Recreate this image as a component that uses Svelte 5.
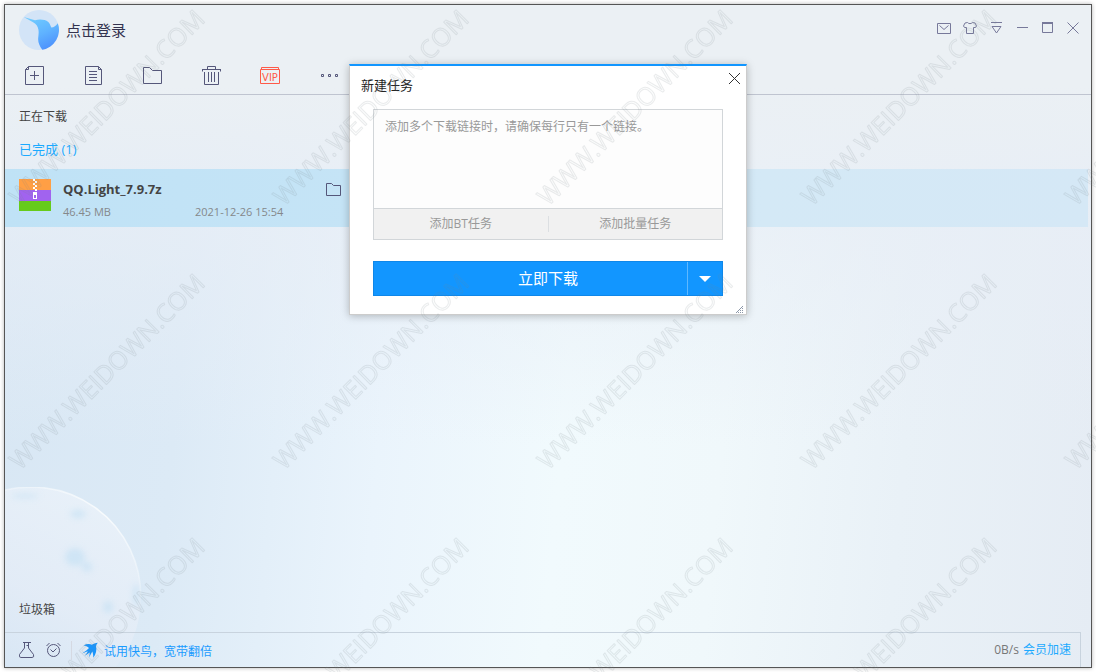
<script>
    let links = $state('')
    let tab = $state('done')

    const file = { name: 'QQ.Light_7.9.7z', size: '46.45 MB', date: '2021-12-26 15:54' }
</script>

<div class="page">
    <div class="window">
        <svg class="planet" viewBox="0 0 142 180" aria-hidden="true">
            <defs>
                <linearGradient id="planet-fill" x1=".8" y1="0" x2=".3" y2="1">
                    <stop offset="0" stop-color="#ecf3fa" stop-opacity=".8" />
                    <stop offset=".5" stop-color="#e6edf7" stop-opacity=".7" />
                    <stop offset="1" stop-color="#cfe2f3" stop-opacity=".7" />
                </linearGradient>
                <linearGradient id="planet-rim" x1="0" y1="0" x2="1" y2="1">
                    <stop offset="0" stop-color="#f6fafd" stop-opacity=".4" />
                    <stop offset=".5" stop-color="#f8fbfd" />
                    <stop offset="1" stop-color="#f6fafd" stop-opacity=".3" />
                </linearGradient>
                <filter id="soft"><feGaussianBlur stdDeviation="3" /></filter>
            </defs>
            <circle cx="26" cy="110" r="110" fill="url(#planet-fill)" />
            <path d="M-10 6A110 110 0 0 1 136 110" fill="none" stroke="url(#planet-rim)" stroke-width="1.5" />
            <g fill="#b9dcf3" filter="url(#soft)" opacity=".5">
                <ellipse cx="73" cy="27" rx="8" ry="4" />
                <ellipse cx="70" cy="70" rx="10" ry="9" />
                <ellipse cx="82" cy="80" rx="5" ry="5" />
                <ellipse cx="131" cy="108" rx="3" ry="12" />
                <ellipse cx="103" cy="120" rx="5" ry="6" />
                <ellipse cx="20" cy="9" rx="14" ry="2" />
            </g>
        </svg>

        <header class="title-bar">
            <button class="login">
                <svg width="40" height="40" viewBox="0 0 40 40" aria-hidden="true">
                    <defs>
                        <linearGradient id="bird" x1=".3" y1="0" x2=".8" y2="1">
                            <stop offset="0" stop-color="#6fcbff" />
                            <stop offset=".5" stop-color="#5fb2ff" />
                            <stop offset="1" stop-color="#4a8cfc" />
                        </linearGradient>
                    </defs>
                    <circle cx="20" cy="20" r="20" fill="#d3e4f7" />
                    <path fill="url(#bird)" d="M4.7 7L16 10.3C20 9 26 9.2 29.3 12C31 13.5 31.5 16 32.3 17.6C35 17.5 37 15.5 38.8 13.2A20 20 0 0 1 23.3 39.7C20.5 36 18.8 32 19.2 28C19.4 25 20 23 19.4 19.5C18.8 16 17 13.8 14.5 12.4Z" />
                </svg>
                <span>点击登录</span>
            </button>
            <div class="window-controls">
                <button aria-label="消息">
                    <svg viewBox="0 0 14 14"><path d="M.5 2.5H13.5V12.5H.5ZM2.5 4.5L7 8.5L11.5 4.5" /></svg>
                </button>
                <button aria-label="皮肤">
                    <svg viewBox="0 0 14 14"><path d="M4.5 1.5C5.5 3 8.5 3 9.5 1.5L12 2L13.5 5L12.5 6.5H10.5V12.5H3.5V6.5H1.5L.5 5L2 2Z" /></svg>
                </button>
                <button aria-label="菜单">
                    <svg viewBox="0 0 14 14"><path d="M2 1.5H13M3 5.5H12L7.5 12Z" /></svg>
                </button>
                <button aria-label="最小化">
                    <svg viewBox="0 0 14 14"><path d="M2 6.5H13" /></svg>
                </button>
                <button aria-label="最大化">
                    <svg viewBox="0 0 14 14"><path d="M1.5 2V11.5H11.5V2" /><path d="M1 2H12" stroke-width="2" /></svg>
                </button>
                <button aria-label="关闭">
                    <svg viewBox="0 0 14 14"><path d="M.5 1.5L11.5 12.5M11.5 1.5L.5 12.5" /></svg>
                </button>
            </div>
        </header>

        <div class="toolbar">
            <button aria-label="新建">
                <svg viewBox="0 0 20 20"><path d="M4.5.5H19.5V18.5H1.5V3.5ZM1.5 3.5H4.5V.5M10.5 5V14M6 9.5H15" /></svg>
            </button>
            <button aria-label="列表">
                <svg viewBox="0 0 20 20"><path d="M2.5.5H15.5L18.5 3.5V18.5H2.5ZM15.5.5V3.5H18.5M6 5.5H14M6 8.5H14M6 11.5H14M6 14.5H14" /></svg>
            </button>
            <button aria-label="打开文件夹">
                <svg viewBox="0 0 20 20"><path d="M1.5 17.5V1.5H7.5L10.5 4.5H19.5V17.5Z" /></svg>
            </button>
            <button aria-label="删除">
                <svg viewBox="0 0 20 20"><path d="M6.5 3V.5H14.5V3M1 3.5H20M1.5 5.5V3.5M19.5 5.5V3.5M3.5 6V18.5H17.5V6M7.5 6V16M10.5 6V16M13.5 6V16" /></svg>
            </button>
            <button class="vip" aria-label="会员">
                <svg viewBox="0 0 20 20">
                    <path d="M1.5 3.5V1.5H18.5V3.5M.5 3.5H19.5V17.5H.5Z" />
                    <text x="10" y="15" text-anchor="middle">VIP</text>
                </svg>
            </button>
            <button aria-label="更多">
                <svg viewBox="0 0 20 20"><path d="M2.5 8.5H4.5V10.5H2.5ZM9.5 8.5H11.5V10.5H9.5ZM16.5 8.5H18.5V10.5H16.5Z" /></svg>
            </button>
        </div>

        <main>
            <nav>
                <button class:active={tab === 'loading'} onclick={() => (tab = 'loading')}>正在下载</button>
                <button class:active={tab === 'done'} onclick={() => (tab = 'done')}>已完成 (1)</button>
            </nav>

            <div class="task">
                <svg width="32" height="32" viewBox="0 0 32 32" shape-rendering="crispEdges" aria-hidden="true">
                    <path fill="#ff9f45" d="M0 0H32V11H0Z" />
                    <path fill="#a163ef" d="M0 11H32V22H0Z" />
                    <path fill="#66cb1b" d="M0 22H32V32H0Z" />
                    <path fill="#fff" d="M14 0H16V2H14ZM16 2H18V4H16ZM14 4H16V6H14ZM16 6H18V8H16ZM14 8H16V10H14ZM16 10H18V12H16Z" />
                    <path fill="#fff" fill-rule="evenodd" d="M14 13H18V20H14ZM15 16V19H17V16Z" />
                </svg>
                <div class="info">
                    <strong>{file.name}</strong>
                    <div class="meta">
                        <span>{file.size}</span>
                        <span>{file.date}</span>
                    </div>
                </div>
                <button class="open" aria-label="打开所在文件夹">
                    <svg width="16" height="14" viewBox="0 0 16 14"><path d="M.5 12.5V.5H5.5L7.5 2.5H14.5V12.5Z" /></svg>
                </button>
            </div>

            <button class="trash">垃圾箱</button>
        </main>

        <footer>
            <button aria-label="实验室">
                <svg width="18" height="16" viewBox="0 0 18 16"><path d="M4 .5H12M5.500 .5V6L.5 12.5Q-.5 15.500 2 15.500H13Q15.500 15.500 14.500 12.500L9.500 6V.5M7.500 3.500H9.500" /></svg>
            </button>
            <button aria-label="定时">
                <svg width="16" height="16" viewBox="0 0 16 16"><circle cx="7.5" cy="8.5" r="6" /><path d="M4.5 7.5L7 10L10.5 6.5M.5 4L3.5 1M11.5 1L14.5 4" /></svg>
            </button>
            <a class="promo" href="#kuainiao">
                <svg width="16" height="16" viewBox="0 0 16 16" aria-hidden="true">
                    <path fill="#1a95fb" d="M1.5 3.5C4.5 1.8 7.5 1.6 10 2.8C11.5 1.6 13.5 1 15.8.7C15 1.6 14.3 2.6 14 4C15 8 14 12 11.3 15.8C11.3 13 11 11 10.3 9.5L7 15.5C7.5 13 7.8 11.5 7.7 10.5L2.5 14C4.5 11.8 5.3 10.5 5.7 9.3L0 11.5C3 9.5 5.5 7.8 7 6C5.5 4.5 3.8 3.7 1.5 3.5Z" />
                </svg>
                <span>试用快鸟，宽带翻倍</span>
            </a>
            <span class="speed">0B/s</span>
            <a href="#vip">会员加速</a>
        </footer>

        <form class="dialog" role="dialog" aria-labelledby="dialog-title" onsubmit={(e) => e.preventDefault()}>
            <div class="dialog-head">
                <h2 id="dialog-title">新建任务</h2>
                <button type="button" aria-label="关闭窗口">
                    <svg width="13" height="13" viewBox="0 0 13 13"><path d="M1 1L12 12M12 1L1 12" /></svg>
                </button>
            </div>
            <div class="links">
                <textarea bind:value={links} aria-label="下载链接" placeholder="添加多个下载链接时，请确保每行只有一个链接。"></textarea>
                <div class="sources">
                    <button type="button">添加BT任务</button>
                    <i></i>
                    <button type="button">添加批量任务</button>
                </div>
            </div>
            <div class="download">
                <button class="start" type="submit">立即下载</button>
                <button class="more" type="button" aria-label="更多选项">
                    <svg width="12" height="6" viewBox="0 0 12 6"><path d="M0 0H12L6 6Z" /></svg>
                </button>
            </div>
            <svg class="grip" width="8" height="8" viewBox="0 0 8 8" shape-rendering="crispEdges" aria-hidden="true">
                <path d="M6 0H7V1H6ZM4 2H5V3H4ZM6 2H7V3H6ZM2 4H3V5H2ZM4 4H5V5H4ZM6 4H7V5H6ZM0 6H1V7H0ZM2 6H3V7H2ZM4 6H5V7H4ZM6 6H7V7H6ZM5 1H6V2H5ZM3 3H4V4H3ZM1 5H2V6H1Z" />
            </svg>
        </form>
    </div>

    <svg class="watermark" aria-hidden="true">
        <defs>
            <pattern id="mark" width="264" height="264" patternUnits="userSpaceOnUse">
                <text transform="translate(20 207) rotate(-45)">WWW.WEIDOWN.COM</text>
            </pattern>
        </defs>
        <rect width="100%" height="100%" fill="url(#mark)" />
    </svg>
</div>

<style>
    :global(body) {
        margin: 0;
        background: #fff;
    }

    .page {
        position: relative;
        display: flex;
        box-sizing: border-box;
        min-height: 100vh;
        padding: 4px;
        overflow: hidden;
        font-family: "Open Sans", "Noto Sans CJK SC", sans-serif;
        font-size: 12px;
        line-height: 16px;
        color: #444;
    }

    .window {
        position: relative;
        display: flex;
        flex-direction: column;
        flex: 1;
        border: 1px solid #555;
        box-shadow: 0 0 4px rgba(0, 0, 0, .3);
        background:
            linear-gradient(#ebf0f4 80px, rgba(232, 238, 246, .8) 200px, rgba(232, 238, 246, 0) 440px),
            linear-gradient(95deg, #d8e7f4, #dceaf6 18%, #eaf4fc 36%, #f1fafd 52%, #f0f8fb 66%, #e9f1f7 82%, #e5ecf4);
    }

    button {
        display: flex;
        align-items: center;
        justify-content: center;
        padding: 0;
        border: 0;
        background: none;
        font: inherit;
        color: inherit;
        cursor: pointer;
    }

    a {
        color: #1caaff;
        text-decoration: none;
    }

    button svg {
        fill: none;
        stroke: #55577a;
    }

    .planet {
        position: absolute;
        left: 0;
        bottom: 0;
        width: 142px;
        height: 180px;
    }

    .title-bar {
        position: relative;
        display: flex;
        justify-content: space-between;
        align-items: flex-start;
        padding: 5px 10px 0 14px;
    }

    .login {
        gap: 7px;
        font-size: 15px;
        color: #33334f;
    }

    .login svg {
        stroke: none;
    }

    .window-controls {
        display: flex;
        gap: 12px;
        padding-top: 11px;
    }

    .window-controls svg {
        width: 14px;
        height: 14px;
        stroke: #77799a;
    }

    .toolbar {
        display: flex;
        gap: 39px;
        padding: 16px 19px 8px;
        border-bottom: 1px solid #bfc4d0;
    }

    .toolbar svg {
        width: 20px;
        height: 20px;
    }

    .toolbar .vip svg {
        stroke: #ff5a48;
    }

    .vip text {
        fill: #ff5a48;
        stroke: none;
        font: 10px "DejaVu Sans", sans-serif;
    }

    main {
        position: relative;
        display: flex;
        flex-direction: column;
        align-items: flex-start;
        flex: 1;
    }

    nav {
        padding: 6px 14px 4px;
    }

    nav button {
        height: 32px;
    }

    nav .active {
        font-size: 13px;
        color: #1caaff;
    }

    .task {
        display: flex;
        align-items: flex-start;
        align-self: stretch;
        box-sizing: border-box;
        height: 58px;
        margin-right: 3px;
        padding: 10px 14px;
        gap: 12px;
        background: linear-gradient(90deg, #bfe2f6, #c5e4f6 32%, #d4e9f6 70%, #d5e8f6);
    }

    .info {
        width: 251px;
    }

    .info strong {
        display: block;
        line-height: 20px;
        font-size: 13px;
    }

    .meta {
        display: grid;
        grid-template-columns: 132px 1fr;
        padding-top: 5px;
        font-size: 11px;
        color: #85888b;
    }

    .open {
        padding-top: 4px;
    }

    .trash {
        margin: auto 14px 13px;
        line-height: 18px;
    }

    footer {
        position: relative;
        display: flex;
        align-items: center;
        height: 34px;
        margin-right: 10px;
        padding: 0 9px 0 14px;
        gap: 9px;
        border: solid #c8d3de;
        border-width: 1px 1px 0 0;
    }

    .promo {
        display: flex;
        align-items: center;
        gap: 6px;
        padding-left: 10px;
        border-left: 1px solid #d5d9e2;
        color: #1a9bff;
    }

    .promo span {
        padding-top: 3px;
    }

    .speed {
        margin-left: auto;
        margin-right: -5px;
        color: #777;
    }

    .dialog {
        position: absolute;
        top: 59px;
        left: 50%;
        box-sizing: border-box;
        width: 398px;
        transform: translateX(-50%);
        padding-bottom: 18px;
        border: 1px solid #ccc;
        border-top: 2px solid #1296ff;
        background: #fff;
        box-shadow: 0 1px 8px rgba(0, 0, 0, .25);
    }

    .dialog-head {
        display: flex;
        align-items: flex-start;
        justify-content: space-between;
        height: 43px;
        padding: 0 5px 0 11px;
    }

    .dialog-head h2 {
        margin: 0;
        font-size: 13px;
        font-weight: 400;
        line-height: 38px;
        color: #222;
    }

    .dialog-head button {
        padding-top: 6px;
    }

    .dialog-head svg {
        stroke: #333;
    }

    .links {
        margin: 0 23px;
        border: 1px solid #d2d6d9;
    }

    textarea {
        display: block;
        box-sizing: border-box;
        width: 100%;
        height: 98px;
        padding: 9px 11px;
        border: 0;
        outline: 0;
        resize: none;
        background: #fdfdfd;
        font: inherit;
        color: #333;
    }

    textarea::placeholder {
        color: #999;
    }

    .sources {
        display: flex;
        align-items: center;
        height: 30px;
        border-top: 1px solid #d2d6d9;
        background: #f1f1f1;
        color: #999;
    }

    .sources button {
        flex: 1;
        height: 30px;
    }

    .sources i {
        width: 1px;
        height: 16px;
        background: #dcdfe2;
    }

    .download {
        display: flex;
        box-sizing: border-box;
        height: 35px;
        margin: 21px 23px 0;
        border: 1px solid #0f87e9;
        background: #1296ff;
        color: #fff;
    }

    .start {
        flex: 1;
        padding: 0 0 2px 35px;
        font-size: 15px;
    }

    .more {
        width: 35px;
        border-left: 1px solid #5fb8ff;
    }

    .more svg {
        fill: #fff;
        stroke: none;
    }

    .grip {
        position: absolute;
        right: 2px;
        bottom: 0;
        fill: #8c97a8;
    }

    .watermark {
        position: absolute;
        inset: 0;
        width: 100%;
        height: 100%;
        pointer-events: none;
    }

    .watermark text {
        font: 25px "Open Sans", sans-serif;
        fill: rgba(120, 130, 140, .02);
        stroke: rgba(110, 120, 130, .14);
        stroke-width: 1px;
        stroke-linejoin: round;
    }
</style>
